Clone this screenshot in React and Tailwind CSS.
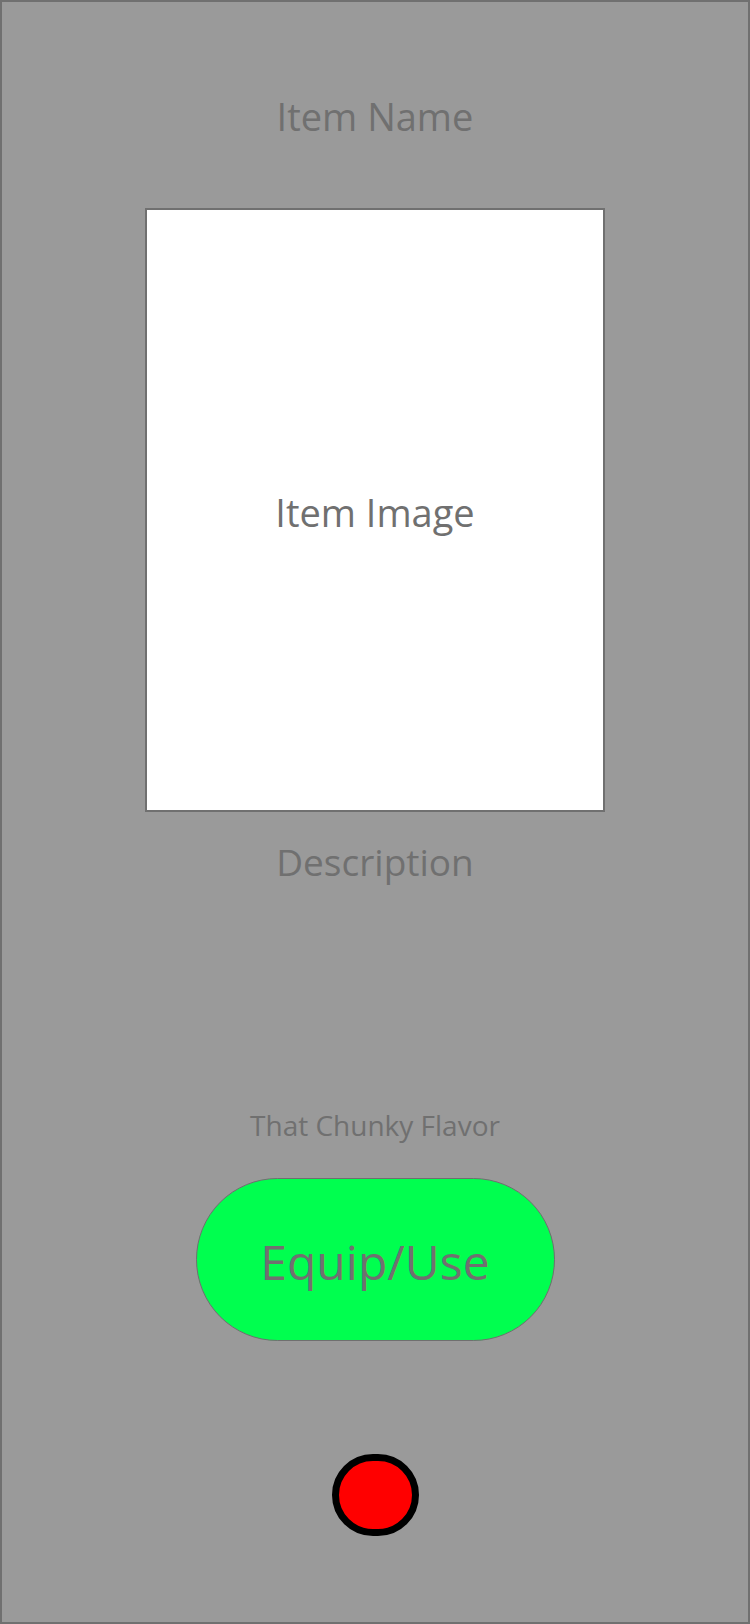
import React from 'react'

export default function App() {
  return (
    <div
      className="w-[750px] h-[1624px] border-2 border-[#707070] bg-[#9a9a9a] flex flex-col items-center text-[#707070]"
      style={{ fontFamily: '"Open Sans", "Noto Sans", sans-serif' }}
    >
      {/* Title */}
      <h1 className="mt-[95px] text-[38px] leading-none font-normal">Item Name</h1>

      {/* Image placeholder */}
      <div className="mt-[73px] w-[460px] h-[604px] border-2 border-[#707070] bg-white flex items-center justify-center pt-1">
        <span className="text-[38px] leading-none">Item Image</span>
      </div>

      <p className="mt-[31px] text-[37px] leading-none">Description</p>

      <p className="mt-[231px] text-[28px] leading-none">That Chunky Flavor</p>

      {/* Action button */}
      <button className="mt-[39px] w-[359px] h-[163px] rounded-full border-[1.5px] border-[#6f6f6f] bg-[#00ff4f] flex items-center justify-center pt-1">
        <span className="text-[48px] leading-none text-[#707070]">Equip/Use</span>
      </button>

      {/* Status dot */}
      <div className="mt-[113px] w-[87px] h-[82px] rounded-full border-[7px] border-black bg-[#ff0000]" />
    </div>
  )
}
